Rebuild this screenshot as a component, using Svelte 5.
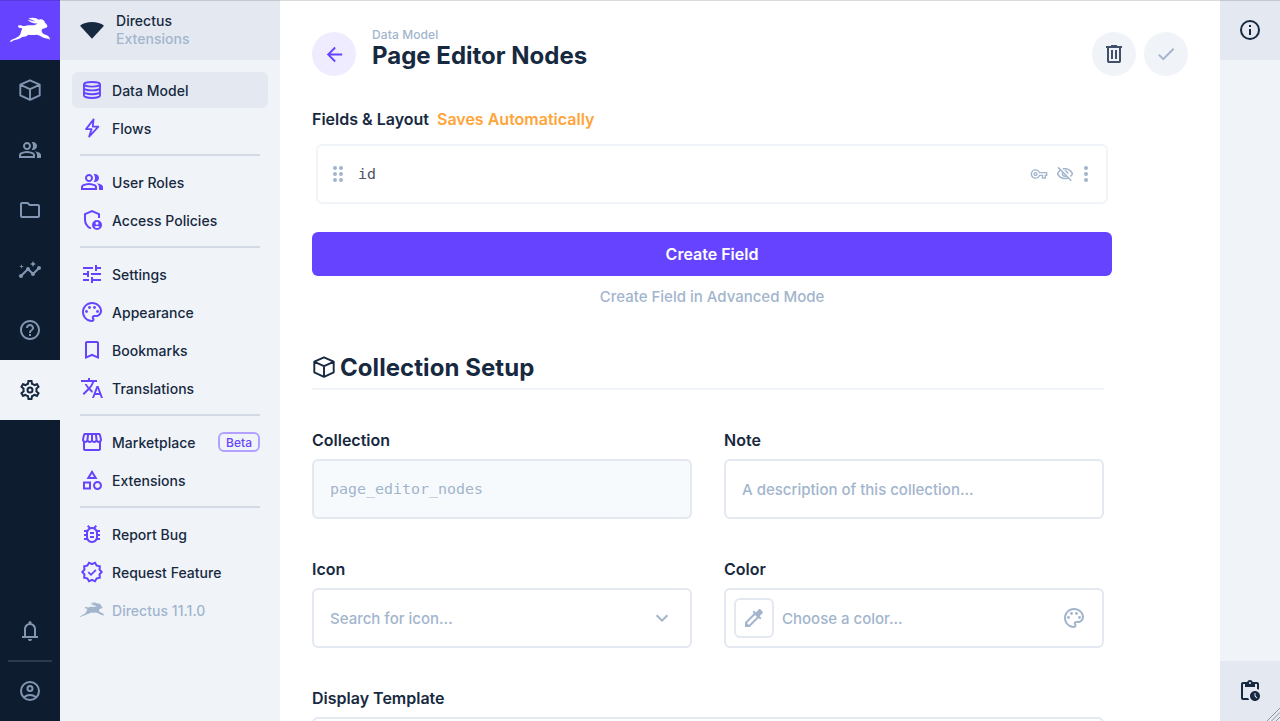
<script>
  const icons = {
    box: '<path d="M12 2.3 21.7 6.7v10.6L12 21.8 2.3 17.3V6.7zM2.5 6.9 12 11.2l9.5-4.3M12 11.2v10.4" fill="none" stroke="currentColor" stroke-width="1.9" stroke-linejoin="round"/>',
    group: '<path d="M1 20v-2.8q0-.85.438-1.562.437-.713 1.162-1.088 1.55-.775 3.15-1.163Q7.35 13 9 13t3.25.387q1.6.388 3.15 1.163.725.375 1.162 1.088Q17 16.35 17 17.2V20Zm18 0v-3q0-1.1-.612-2.113-.613-1.012-1.738-1.737 1.275.15 2.4.512 1.125.363 2.1.888.9.5 1.375 1.112Q23 16.275 23 17v3ZM9 12q-1.65 0-2.825-1.175Q5 9.65 5 8q0-1.65 1.175-2.825Q7.35 4 9 4q1.65 0 2.825 1.175Q13 6.35 13 8q0 1.65-1.175 2.825Q10.65 12 9 12Zm10-4q0 1.65-1.175 2.825Q16.65 12 15 12q-.275 0-.7-.062-.425-.063-.7-.138.675-.8 1.037-1.775Q15 9.05 15 8q0-1.05-.363-2.025Q14.275 5 13.6 4.2q.35-.125.7-.163Q14.65 4 15 4q1.65 0 2.825 1.175Q19 6.35 19 8ZM3 18h12v-.8q0-.275-.137-.5-.138-.225-.363-.35-1.35-.675-2.725-1.013Q10.4 15 9 15t-2.775.337Q4.85 15.675 3.5 16.35q-.225.125-.362.35-.138.225-.138.5Zm6-8q.825 0 1.413-.588Q11 8.825 11 8t-.587-1.412Q9.825 6 9 6q-.825 0-1.412.588Q7 7.175 7 8t.588 1.412Q8.175 10 9 10Z"/>',
    folder: '<path d="M9.17 6l2 2H20v10H4V6h5.17M10 4H4c-1.1 0-1.99.9-1.99 2L2 18c0 1.1.9 2 2 2h16c1.1 0 2-.9 2-2V8c0-1.1-.9-2-2-2h-8l-2-2z"/>',
    insights: '<path d="M21 8c-1.45 0-2.26 1.44-1.93 2.51l-3.55 3.56c-.3-.09-.74-.09-1.04 0l-2.55-2.55C12.27 10.45 11.46 9 10 9c-1.45 0-2.27 1.44-1.93 2.52l-4.56 4.55C2.44 15.74 1 16.55 1 18c0 1.1.9 2 2 2 1.45 0 2.26-1.44 1.93-2.51l4.55-4.56c.3.09.74.09 1.04 0l2.55 2.55C12.73 16.55 13.54 18 15 18c1.45 0 2.27-1.44 1.93-2.52l3.56-3.55c1.07.33 2.51-.48 2.51-1.93 0-1.1-.9-2-2-2zM15 9l.94-2.07L18 6l-2.06-.93L15 3l-.92 2.07L12 6l2.08.93zM3.5 11L4 9l2-.5L4 8l-.5-2L3 8l-2 .5L3 9z"/>',
    help: '<path d="M11 18h2v-2h-2v2zm1-16C6.48 2 2 6.48 2 12s4.48 10 10 10 10-4.48 10-10S17.52 2 12 2zm0 18c-4.41 0-8-3.59-8-8s3.59-8 8-8 8 3.59 8 8-3.59 8-8 8zm0-14c-2.21 0-4 1.79-4 4h2c0-1.1.9-2 2-2s2 .9 2 2c0 2-3 1.75-3 5h2c0-2.25 3-2.5 3-5 0-2.21-1.79-4-4-4z"/>',
    gear: '<path d="M19.43 12.98c.04-.32.07-.64.07-.98 0-.34-.03-.66-.07-.98l2.11-1.65c.19-.15.24-.42.12-.64l-2-3.46c-.09-.16-.26-.25-.44-.25-.06 0-.12.01-.17.03l-2.49 1c-.52-.4-1.08-.73-1.69-.98l-.38-2.65C14.46 2.18 14.25 2 14 2h-4c-.25 0-.46.18-.49.42l-.38 2.65c-.61.25-1.17.59-1.69.98l-2.49-1c-.06-.02-.12-.03-.18-.03-.17 0-.34.09-.43.25l-2 3.46c-.13.22-.07.49.12.64l2.11 1.65c-.04.32-.07.65-.07.98 0 .33.03.66.07.98l-2.11 1.65c-.19.15-.24.42-.12.64l2 3.46c.09.16.26.25.44.25.06 0 .12-.01.17-.03l2.49-1c.52.4 1.08.73 1.69.98l.38 2.65c.03.24.24.42.49.42h4c.25 0 .46-.18.49-.42l.38-2.65c.61-.25 1.17-.59 1.69-.98l2.49 1c.06.02.12.03.18.03.17 0 .34-.09.43-.25l2-3.46c.12-.22.07-.49-.12-.64l-2.11-1.65zm-1.98-1.71c.04.31.05.52.05.73 0 .21-.02.43-.05.73l-.14 1.13.89.7 1.08.84-.7 1.21-1.27-.51-1.04-.42-.9.68c-.43.32-.84.56-1.25.73l-1.06.43-.16 1.13-.2 1.35h-1.4l-.19-1.35-.16-1.13-1.06-.43c-.43-.18-.83-.41-1.23-.71l-.91-.7-1.06.43-1.27.51-.7-1.21 1.08-.84.89-.7-.14-1.13c-.03-.31-.05-.54-.05-.74s.02-.43.05-.73l.14-1.13-.89-.7-1.08-.84.7-1.21 1.27.51 1.04.42.9-.68c.43-.32.84-.56 1.25-.73l1.06-.43.16-1.13.2-1.35h1.39l.19 1.35.16 1.13 1.06.43c.43.18.83.41 1.23.71l.91.7 1.06-.43 1.27-.51.7 1.21-1.07.85-.89.7.14 1.13z"/><circle cx="12" cy="12" r="2.5" fill="none" stroke="currentColor" stroke-width="2"/>',
    bell: '<path d="M4 19v-2h2v-7q0-2.075 1.25-3.687Q8.5 4.7 10.5 4.2v-.7q0-.625.438-1.062Q11.375 2 12 2t1.063.438q.437.437.437 1.062v.7q2 .5 3.25 2.113Q18 7.925 18 10v7h2v2Zm8 3q-.825 0-1.412-.587Q10 20.825 10 20h4q0 .825-.587 1.413Q12.825 22 12 22Zm-4-5h8v-7q0-1.65-1.175-2.825Q13.65 6 12 6q-1.65 0-2.825 1.175Q8 8.35 8 10Z"/>',
    account: '<g fill="none" stroke="currentColor" stroke-width="2"><circle cx="12" cy="12" r="9"/><circle cx="12" cy="9.5" r="2.5"/><path d="M5.8 18.2q6.2-4.4 12.4 0"/></g>',
    database: '<g fill="none" stroke="currentColor" stroke-width="1.9"><ellipse cx="12" cy="6.3" rx="8" ry="2.3"/><path d="M4 6.3v11.2C4 18.9 7.5 20 12 20s8-1.1 8-2.5V6.3M4 9.9c0 1.4 3.5 2.5 8 2.5s8-1.1 8-2.5M4 13.7c0 1.4 3.5 2.5 8 2.5s8-1.1 8-2.5"/></g>',
    bolt: '<path d="M13.6 3.4 6 13.1h5.6L9.2 20.6l9.2-10h-5.7z" fill="none" stroke="currentColor" stroke-width="1.8" stroke-linejoin="round"/>',
    policy: '<path d="M19 10V6.1L12 3.2 5 6.1v5.3c0 4 2.4 7.4 5.9 9" fill="none" stroke="currentColor" stroke-width="2"/><path fill-rule="evenodd" d="M17 12a5 5 0 1 0 0 10 5 5 0 0 0 0-10zm0 1.8a1.5 1.5 0 1 1 0 3 1.5 1.5 0 0 1 0-3zm0 6.2a3.4 3.4 0 0 1-2.7-1.2q2.7-1.8 5.4 0A3.4 3.4 0 0 1 17 20z"/>',
    tune: '<path d="M3 17v2h6v-2H3zM3 5v2h10V5H3zm10 16v-2h8v-2h-8v-2h-2v6h2zM7 9v2H3v2h4v2h2V9H7zm14 4v-2H11v2h10zm-6-4h2V7h4V5h-4V3h-2v6z"/>',
    palette: '<path d="M12 22C6.49 22 2 17.51 2 12S6.49 2 12 2s10 4.04 10 9c0 3.31-2.69 6-6 6h-1.77c-.28 0-.5.22-.5.5 0 .12.05.23.13.33.41.47.64 1.06.64 1.67 0 1.38-1.12 2.5-2.5 2.5zm0-18c-4.41 0-8 3.59-8 8s3.59 8 8 8c.28 0 .5-.22.5-.5 0-.16-.08-.28-.14-.35-.41-.46-.63-1.05-.63-1.65 0-1.38 1.12-2.5 2.5-2.5H16c2.21 0 4-1.79 4-4 0-3.86-3.59-7-8-7z"/><circle cx="6.5" cy="11.5" r="1.4"/><circle cx="9.5" cy="7.5" r="1.4"/><circle cx="14.5" cy="7.5" r="1.4"/><circle cx="17.5" cy="11.5" r="1.4"/>',
    bookmark: '<path d="M17 3H7c-1.1 0-2 .9-2 2v16l7-3 7 3V5c0-1.1-.9-2-2-2zm0 15l-5-2.18L7 18V5h10v13z"/>',
    translate: '<path d="M12.87 15.07l-2.54-2.51.03-.03c1.74-1.94 2.98-4.17 3.71-6.53H17V4h-7V2H8v2H1v1.99h11.17C11.5 7.92 10.44 9.75 9 11.35 8.07 10.32 7.3 9.19 6.69 8h-2c.73 1.63 1.73 3.17 2.98 4.56l-5.09 5.02L4 19l5-5 3.11 3.11.76-2.04zM18.5 10h-2L12 22h2l1.12-3h4.75L21 22h2l-4.5-12zm-2.62 7l1.62-4.33L19.12 17h-3.24z"/>',
    store: '<path d="M21.9 8.89l-1.05-4.37c-.22-.9-1-1.52-1.91-1.52H5.05c-.9 0-1.69.63-1.9 1.52L2.1 8.89c-.24 1.02-.02 2.06.62 2.88.08.11.19.19.28.29V19c0 1.1.9 2 2 2h14c1.1 0 2-.9 2-2v-6.94c.09-.09.2-.18.28-.28.64-.82.87-1.87.62-2.89zm-2.99-3.9l1.05 4.37c.1.42.01.84-.25 1.17-.14.18-.44.47-.94.47-.61 0-1.14-.49-1.21-1.14L16.98 5l1.93-.01zM13 5h1.96l.54 4.52c.05.39-.07.78-.33 1.07-.22.26-.54.41-.95.41-.67 0-1.22-.59-1.22-1.31V5zM8.49 9.52L9.04 5H11v4.69c0 .72-.55 1.31-1.29 1.31-.34 0-.65-.15-.89-.41-.25-.29-.37-.68-.33-1.07zm-4.45-.16L5.05 5h1.97l-.58 4.86c-.08.65-.6 1.14-1.21 1.14-.49 0-.8-.29-.93-.47-.27-.32-.36-.75-.26-1.17zM5 19v-6.03c.08.01.15.03.23.03.87 0 1.66-.36 2.24-.95.6.6 1.4.95 2.31.95.87 0 1.65-.36 2.23-.93.59.57 1.39.93 2.29.93.84 0 1.64-.35 2.24-.95.58.59 1.37.95 2.24.95.08 0 .15-.02.23-.03V19H5z"/>',
    category: '<path d="M12 2l-5.5 9h11L12 2zm0 3.84L13.93 9h-3.87L12 5.84zM17.5 13c-2.49 0-4.5 2.01-4.5 4.5s2.01 4.5 4.5 4.5 4.5-2.01 4.5-4.5-2.01-4.5-4.5-4.5zm0 7c-1.38 0-2.5-1.12-2.5-2.5s1.12-2.5 2.5-2.5 2.5 1.12 2.5 2.5-1.12 2.5-2.5 2.5zM3 21.5h8v-8H3v8zm2-6h4v4H5v-4z"/>',
    bug: '<path d="M20 8h-2.81c-.45-.78-1.07-1.45-1.82-1.96L17 4.41 15.59 3l-2.17 2.17C12.96 5.06 12.49 5 12 5s-.96.06-1.41.17L8.41 3 7 4.41l1.62 1.63C7.88 6.55 7.26 7.22 6.81 8H4v2h2.09c-.05.33-.09.66-.09 1v1H4v2h2v1c0 .34.04.67.09 1H4v2h2.81c1.04 1.79 2.97 3 5.19 3s4.15-1.21 5.19-3H20v-2h-2.09c.05-.33.09-.66.09-1v-1h2v-2h-2v-1c0-.34-.04-.67-.09-1H20V8zm-4 4v3c0 2.2-1.8 4-4 4s-4-1.8-4-4v-4c0-2.2 1.8-4 4-4s4 1.8 4 4v1zm-6 2h4v2h-4zm0-4h4v2h-4z"/>',
    badge: '<path d="M23 12l-2.44-2.78.34-3.68-3.61-.82-1.89-3.18L12 3 8.6 1.54 6.71 4.72l-3.61.81.34 3.68L1 12l2.44 2.78-.34 3.69 3.61.82 1.89 3.18L12 21l3.4 1.46 1.89-3.18 3.61-.82-.34-3.68L23 12zm-4.51 2.11l.26 2.79-2.74.62-1.43 2.41L12 18.82l-2.58 1.11-1.43-2.41-2.74-.62.26-2.8L3.66 12l1.85-2.12-.26-2.78 2.74-.61 1.43-2.41L12 5.18l2.58-1.11 1.43 2.41 2.74.62-.26 2.79L20.34 12l-1.85 2.11z"/><path d="m8.3 12.1 2.7 2.7 4.9-5" fill="none" stroke="currentColor" stroke-width="1.8"/>',
    info: '<g fill="none" stroke="currentColor" stroke-width="2"><circle cx="12" cy="12" r="9"/><path d="M12 11v6M12 7v2"/></g>',
    trash: '<path fill-rule="evenodd" d="M7 21q-.825 0-1.412-.587Q5 19.825 5 19V6H4V4h5V3h6v1h5v2h-1v13q0 .825-.587 1.413Q17.825 21 17 21ZM17 6H7v13h10ZM9 17h2V8H9Zm4 0h2V8h-2Z"/>',
    check: '<path d="M9 16.17L4.83 12l-1.42 1.41L9 19 21 7l-1.41-1.41z"/>',
    back: '<path d="M20 11H7.83l5.59-5.59L12 4l-8 8 8 8 1.41-1.41L7.83 13H20v-2z"/>',
    key: '<path d="M22 19h-6v-4h-2.68c-1.14 2.42-3.6 4-6.32 4-3.86 0-7-3.14-7-7s3.14-7 7-7c2.72 0 5.17 1.58 6.32 4H24v6h-2v4zm-4-2h2v-4h2v-2H11.94l-.23-.67C11.01 8.34 9.11 7 7 7c-2.76 0-5 2.24-5 5s2.24 5 5 5c2.11 0 4.01-1.34 4.71-3.33l.23-.67H18v4zM7 15c-1.65 0-3-1.35-3-3s1.35-3 3-3 3 1.35 3 3-1.35 3-3 3zm0-4c-.55 0-1 .45-1 1s.45 1 1 1 1-.45 1-1-.45-1-1-1z" transform="translate(.9 .9) scale(.925)"/>',
    hidden: '<path d="M12 6c3.79 0 7.17 2.13 8.82 5.5-.59 1.22-1.42 2.27-2.41 3.12l1.41 1.41c1.39-1.23 2.49-2.77 3.18-4.53C21.27 7.11 17 4 12 4c-1.27 0-2.49.2-3.64.57l1.65 1.65C10.66 6.09 11.32 6 12 6zm-1.07 1.14L13 9.21c.57.25 1.03.71 1.28 1.28l2.07 2.07c.08-.34.14-.7.14-1.07C16.5 9.01 14.48 7 12 7c-.37 0-.72.05-1.07.14zM2.01 3.87l2.68 2.68C3.06 7.83 1.77 9.53 1 11.5 2.73 15.89 7 19 12 19c1.52 0 2.98-.29 4.32-.82l3.42 3.42 1.41-1.41L3.42 2.45 2.01 3.87zm7.5 7.5l2.61 2.61c-.04.01-.08.02-.12.02-1.38 0-2.5-1.12-2.5-2.5 0-.05.01-.08.01-.13zm-3.4-3.4l1.75 1.75c-.23.55-.36 1.15-.36 1.78 0 2.48 2.02 4.5 4.5 4.5.63 0 1.23-.13 1.77-.36l.98.98c-.88.24-1.8.38-2.75.38-3.79 0-7.17-2.13-8.82-5.5.7-1.43 1.72-2.61 2.93-3.53z"/>',
    more: '<circle cx="12" cy="6" r="2"/><circle cx="12" cy="12" r="2"/><circle cx="12" cy="18" r="2"/>',
    drag: '<circle cx="9" cy="6" r="2"/><circle cx="9" cy="12" r="2"/><circle cx="9" cy="18" r="2"/><circle cx="15" cy="6" r="2"/><circle cx="15" cy="12" r="2"/><circle cx="15" cy="18" r="2"/>',
    chevron: '<path d="m6.6 9.2 5.4 5.4 5.4-5.4" fill="none" stroke="currentColor" stroke-width="2"/>',
    dropper: '<path d="M20.71 5.63l-2.34-2.34c-.2-.2-.45-.29-.71-.29s-.51.1-.71.29l-3.12 3.12-1.93-1.91-1.41 1.41 1.42 1.42L3 16.25V21h4.75l8.92-8.92 1.42 1.42 1.41-1.41-1.92-1.92 3.12-3.12c.4-.4.4-1.03.01-1.42zM6.92 19L5 17.08l8.06-8.06 1.92 1.92L6.92 19z"/>',
    pending: '<path d="M17 12c-2.76 0-5 2.24-5 5s2.24 5 5 5 5-2.24 5-5-2.24-5-5-5zm1.65 7.35L16.5 17.2V14h1v2.79l1.85 1.85-.7.71zM19 3h-4.18C14.4 1.84 13.3 1 12 1s-2.4.84-2.82 2H5c-1.1 0-2 .9-2 2v14c0 1.1.9 2 2 2h6.11c-.4-.57-.7-1.25-.9-2H5V5h2v3h10V5h2v5.08c.71.1 1.38.31 2 .6V5c0-1.1-.9-2-2-2zm-7 2c-.55 0-1-.45-1-1s.45-1 1-1 1 .45 1 1-.45 1-1 1z"/>',
    fan: '<path d="M12 20.7 0 7.7C5.5 2.7 18.5 2.7 24 7.7z"/>'
  };

  const modules = ['box', 'group', 'folder', 'insights', 'help', 'gear'];

  const sections = [
    [['database', 'Data Model'], ['bolt', 'Flows']],
    [['group', 'User Roles'], ['policy', 'Access Policies']],
    [['tune', 'Settings'], ['palette', 'Appearance'], ['bookmark', 'Bookmarks'], ['translate', 'Translations']],
    [['store', 'Marketplace'], ['category', 'Extensions']],
    [['bug', 'Report Bug'], ['badge', 'Request Feature'], ['rabbit', 'Directus 11.1.0']]
  ];
</script>

{#snippet icon(name, size = 24)}
  <svg class="icon" width={size} height={size} viewBox="0 0 24 24" fill="currentColor">{@html icons[name]}</svg>
{/snippet}

{#snippet rabbit(width)}
  <svg class="icon" {width} height={width * 0.634} viewBox="0 0 120 76" fill="currentColor">
    <path d="M1 75C-1 71 4 69 8 67C17 63 26 59 30 53C33 47 34 40 37 35C34 32 31 34 27 32C23 30 23 25 28 25C34 24 38 28 44 27C54 22 65 26 74 24C79 23 82 21 82 19C72 20 58 15 53 8C61 10 69 12 76 14C69 9 62 7 55 5C64 0 78 1 87 8C96 5 103 9 105 17C108 20 113 24 112 28C111 34 102 34 97 36C93 40 95 45 98 49C103 54 110 53 115 58C119 61 120 65 119 68C113 63 107 65 101 62C94 59 88 55 80 53C71 54 63 55 55 53C50 58 44 59 37 60C29 66 19 68 12 70C7 71 6 75 1 75Z" />
  </svg>
{/snippet}

<div class="app">
  <aside class="modules">
    <div class="logo">{@render rabbit(40)}</div>
    {#each modules as name}
      <div class="module" class:active={name === 'gear'}>{@render icon(name)}</div>
    {/each}
    <div class="bottom">
      <div class="module">{@render icon('bell')}</div>
      <hr />
      <div class="module">{@render icon('account')}</div>
    </div>
  </aside>

  <nav>
    <header class="project">
      {@render icon('fan')}
      <div><div>Directus</div><div class="sub">Extensions</div></div>
    </header>
    <div class="links">
      {#each sections as links, i}
        {#if i}<hr />{/if}
        {#each links as [name, label]}
          <div class="link" class:current={label === 'Data Model'} class:version={name === 'rabbit'}>
            {#if name === 'rabbit'}{@render rabbit(24)}{:else}{@render icon(name)}{/if}
            <span>{label}</span>
            {#if name === 'store'}<b class="beta">Beta</b>{/if}
          </div>
        {/each}
      {/each}
    </div>
  </nav>

  <main>
    <header class="title">
      <div class="round back">{@render icon('back', 23)}</div>
      <div class="heading">
        <div class="crumb">Data Model</div>
        <h1>Page Editor Nodes</h1>
      </div>
      <div class="round dark">{@render icon('trash')}</div>
      <div class="round">{@render icon('check', 22)}</div>
    </header>

    <div class="label fields">Fields &amp; Layout <span>Saves Automatically</span></div>
    <div class="field">
      {@render icon('drag')}
      <code>id</code>
      <div class="actions">
        {@render icon('key', 18)}
        {@render icon('hidden', 18)}
      </div>
      {@render icon('more')}
    </div>
    <div class="create">Create Field</div>
    <div class="advanced">Create Field in Advanced Mode</div>

    <h2>{@render icon('box')}<span>Collection Setup</span></h2>

    <div class="grid">
      <div>
        <div class="label">Collection</div>
        <div class="input disabled"><code>page_editor_nodes</code></div>
      </div>
      <div>
        <div class="label">Note</div>
        <div class="input"><span>A description of this collection...</span></div>
      </div>
      <div>
        <div class="label">Icon</div>
        <div class="input"><span>Search for icon...</span>{@render icon('chevron')}</div>
      </div>
      <div>
        <div class="label">Color</div>
        <div class="input color">
          <div class="swatch">{@render icon('dropper')}</div>
          <span>Choose a color...</span>
          {@render icon('palette')}
        </div>
      </div>
      <div class="full">
        <div class="label">Display Template</div>
        <div class="input"></div>
      </div>
    </div>
  </main>

  <aside class="sidebar">
    <div class="side">{@render icon('info')}</div>
    <div class="side">{@render icon('pending')}</div>
  </aside>

  <div class="topline"></div>
  <svg class="grip" width="14" height="14" viewBox="0 0 14 14"><path d="M1 14 14 1M5.5 14 14 5.5M10 14l4-4" stroke="#8d93a0" fill="none" /></svg>
</div>

<style>
  :global(body) { margin: 0; overflow: hidden; }
  .app {
    position: relative;
    display: flex;
    width: 1280px;
    height: 721px;
    overflow: hidden;
    background: #fff;
    font: 500 15px/20px Inter, sans-serif;
    color: #172940;
  }
  .app * { box-sizing: border-box; }
  .icon { display: block; flex: none; }
  hr { margin: 0; border: 0; height: 2px; }

  .modules { width: 60px; display: flex; flex-direction: column; background: #0e1c2f; color: #8196b1; }
  .logo, .module { height: 60px; flex: none; display: flex; align-items: center; justify-content: center; }
  .logo { background: #6644ff; color: #fff; }
  .module.active { background: #f0f4f9; color: #172940; }
  .bottom { margin-top: auto; }
  .bottom hr { margin: -1px 8px; background: #2b394b; }

  nav { width: 220px; background: #f0f4f9; font-size: 14px; letter-spacing: 0.03px; }
  .project { height: 60px; padding: 0 20px; display: flex; align-items: center; gap: 12px; background: #e4e9f1; line-height: 18px; }
  .project .sub { color: #a2b5cd; }
  .links { padding: 12px; display: flex; flex-direction: column; }
  .links hr { margin: 6px 8px 8px; background: #d3dae4; }
  .link { height: 36px; margin-bottom: 2px; padding: 0 8px; display: flex; align-items: center; gap: 8px; border-radius: 6px; }
  .link span { padding-top: 1px; }
  .link .icon { color: #6644ff; }
  .current { background: #e4e9f1; }
  .version, .link.version .icon { color: #a2b5cd; }
  .beta {
    margin-left: auto; height: 20px; padding: 0 6px; border: 2px solid #b3a1ff; border-radius: 6px;
    font-size: 12px; line-height: 17px; font-weight: 500; color: #6644ff;
  }

  main { width: 940px; padding: 0 116px 0 32px; }
  .title { height: 60px; margin-top: 24px; margin-right: -84px; display: flex; align-items: center; gap: 8px; }
  .round { width: 44px; height: 44px; border-radius: 50%; display: flex; align-items: center; justify-content: center; background: #f0f4f9; color: #a2b5cd; }
  .back { margin-right: 8px; background: #f0ecff; color: #6644ff; }
  .dark { color: #41506a; }
  .heading { flex: 1; padding-bottom: 11px; }
  .crumb { font-size: 12px; font-weight: 500; line-height: 14px; letter-spacing: 0.1px; color: #a2b5cd; }
  h1, h2 { margin: 0; font-weight: 700; font-size: 24px; line-height: 28px; }
  .label { font-size: 16px; line-height: 20px; font-weight: 600; }
  .fields { margin-top: 25px; }
  .fields span { margin-left: 4px; color: #ffa439; }
  .field {
    height: 60px; margin: 15px -4px 0 4px; padding: 0 8px; display: flex; align-items: center;
    border: 2px solid #f0f4f9; border-radius: 6px; color: #a2b5cd;
  }
  code { font: 14.95px/20px "DejaVu Sans Mono", monospace; }
  .field code { flex: 1; margin-left: 8px; color: #4f5464; }
  .actions { display: flex; gap: 8px; }
  .create { height: 44px; margin: 28px -8px 0 0; border-radius: 6px; background: #6644ff; color: #fff; font-size: 16px; font-weight: 600; line-height: 44px; text-align: center; }
  .advanced { margin: 11px -8px 0 0; color: #a2b5cd; text-align: center; }
  h2 { margin-top: 43px; height: 40px; display: flex; gap: 4px; border-bottom: 2px solid #f0f4f9; line-height: 36px; letter-spacing: 0.06px; }
  h2 .icon { margin-top: 5px; }
  .grid { margin-top: 40px; display: grid; grid-template-columns: 380px 380px; gap: 40px 32px; }
  .full { grid-column: 1 / -1; }
  .input { height: 60px; margin-top: 9px; padding: 0 16px; display: flex; align-items: center; border: 2px solid #e4e9f1; border-radius: 6px; color: #a2b5cd; }
  .disabled { background: #f7fafc; }
  .input span { flex: 1; padding-top: 2px; }
  .color { padding-left: 8px; gap: 8px; }
  .swatch { width: 40px; height: 40px; display: flex; align-items: center; justify-content: center; border: 2px solid #e4e9f1; border-radius: 6px; }

  .sidebar { width: 60px; display: flex; flex-direction: column; justify-content: space-between; background: #f0f4f9; }
  .side { height: 60px; display: flex; align-items: center; justify-content: center; background: #e4e9f1; }
  .topline { position: absolute; inset: 0 0 auto; height: 1px; background: rgba(0, 0, 0, 0.14); }
  .grip { position: absolute; right: 0; bottom: 0; }
</style>
